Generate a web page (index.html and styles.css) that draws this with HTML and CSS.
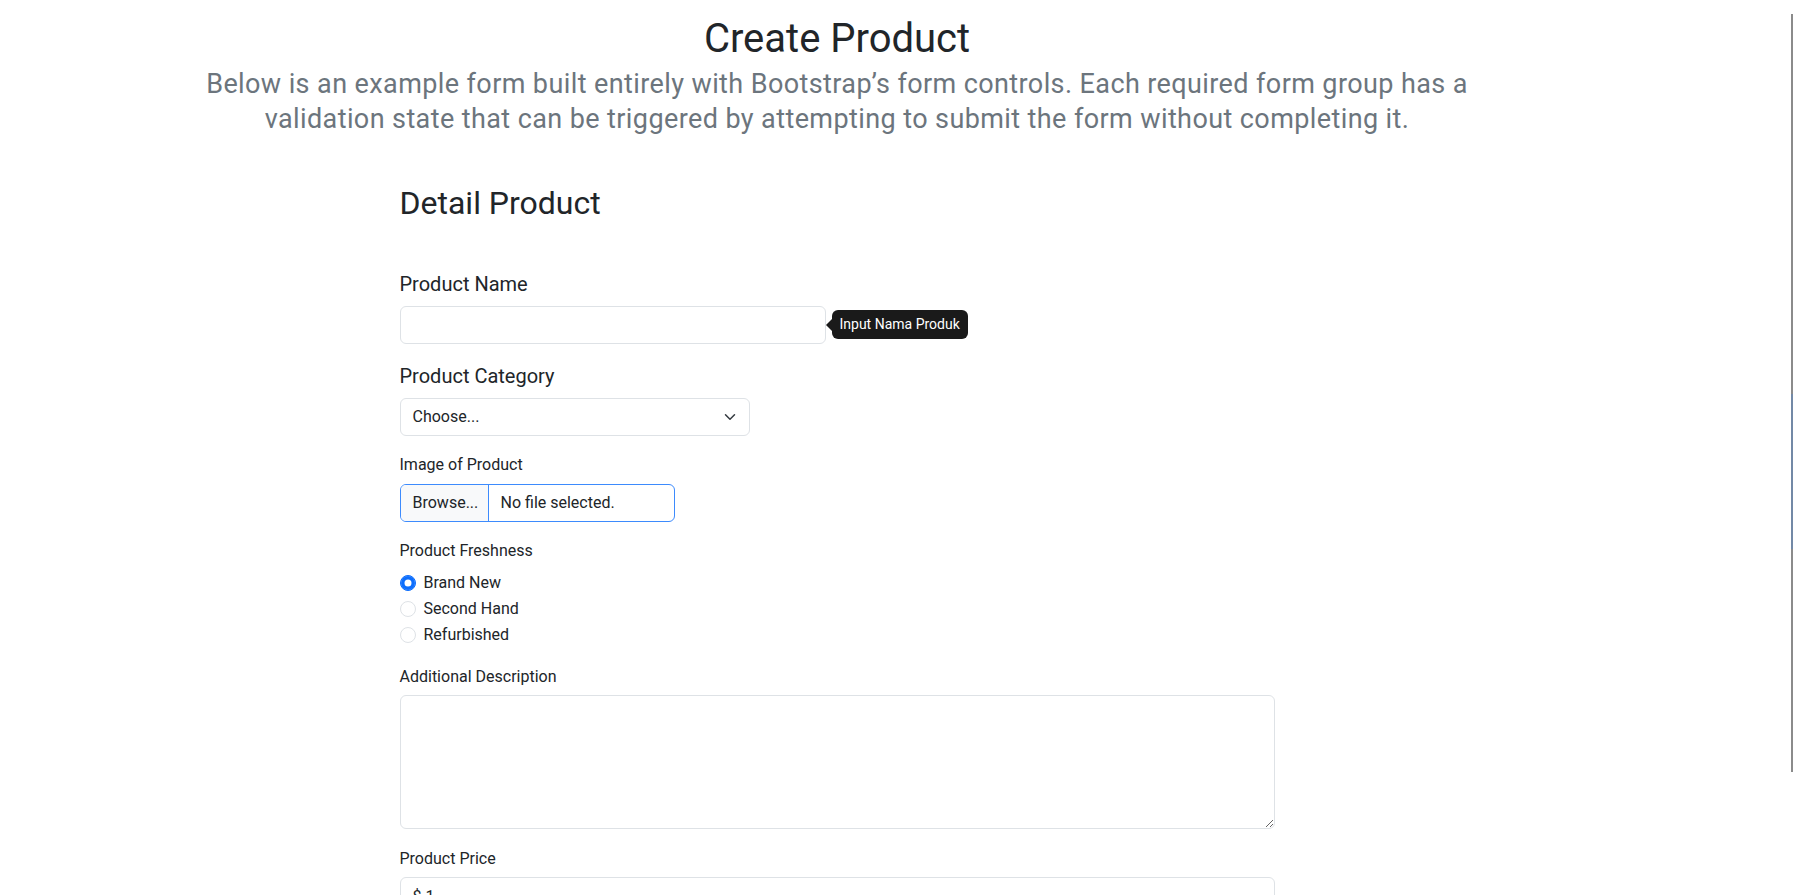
FILE: index.html
```html
<!DOCTYPE html>
<html lang="en">
<head>
<meta charset="utf-8">
<title>Create Product</title>
<link rel="stylesheet" href="styles.css">
</head>
<body>
<div class="page">
  <header class="intro">
    <h1 class="title">Create Product</h1>
    <p class="lead">Below is an example form built entirely with Bootstrap’s form controls. Each required form group has a<br>validation state that can be triggered by attempting to submit the form without completing it.</p>
  </header>

  <form class="form">
    <h2 class="section-title">Detail Product</h2>

    <div class="group">
      <label class="label label-lg" for="name">Product Name</label>
      <div class="name-wrap">
        <input class="control" id="name" type="text">
        <div class="tooltip"><span class="tooltip-arrow"></span>Input Nama Produk</div>
      </div>
    </div>

    <div class="group">
      <label class="label label-lg">Product Category</label>
      <div class="control select">
        <span>Choose...</span>
        <svg class="chevron" width="16" height="12" viewBox="0 0 16 16" aria-hidden="true"><path d="m2 5 6 6 6-6" fill="none" stroke="#343a40" stroke-linecap="round" stroke-linejoin="round" stroke-width="2"/></svg>
      </div>
    </div>

    <div class="group">
      <label class="label">Image of Product</label>
      <div class="file">
        <span class="file-btn">Browse...</span>
        <span class="file-name">No file selected.</span>
      </div>
    </div>

    <div class="group group-checks">
      <div class="label">Product Freshness</div>
      <div class="check"><span class="radio radio-on"></span><span>Brand New</span></div>
      <div class="check"><span class="radio"></span><span>Second Hand</span></div>
      <div class="check"><span class="radio"></span><span>Refurbished</span></div>
    </div>

    <div class="group">
      <label class="label label-low" for="desc">Additional Description</label>
      <textarea class="control textarea" id="desc" rows="5"></textarea>
    </div>

    <div class="group">
      <label class="label label-low" for="price">Product Price</label>
      <input class="control" id="price" type="text" value="$ 1">
    </div>
  </form>
</div>
<div class="scrollbar"><span class="scroll-thumb"></span></div>
</body>
</html>
```

FILE: styles.css
```css
html, body {
  margin: 0;
  padding: 0;
  overflow: hidden;
  background: #fff;
}

body {
  font-family: Roboto, "Liberation Sans", sans-serif;
  font-size: 16px;
  line-height: 1.5;
  color: #212529;
}

.page {
  width: 1674px;
}

.intro {
  text-align: center;
  padding-top: 15px;
}

.title {
  margin: 0;
  font-size: 40px;
  font-weight: 400;
  line-height: 48px;
}

.lead {
  margin: 4px 0 0;
  font-size: 27px;
  line-height: 35px;
  letter-spacing: 0.4px;
  color: #6c757d;
}

.form {
  width: 875px;
  margin: 0 auto;
}

.section-title {
  margin: 47px 0 46px;
  font-size: 32px;
  font-weight: 400;
  line-height: 38px;
}

.group {
  margin-bottom: 16px;
}

.group-checks {
  margin-bottom: 17px;
}

.label {
  display: block;
  box-sizing: border-box;
  margin-bottom: 8px;
  padding-top: 1px;
  height: 24px;
  font-size: 16px;
  line-height: 24px;
}

.label-lg {
  height: 30px;
  padding-top: 1px;
  font-size: 20px;
  line-height: 30px;
}

.label-low {
  padding-top: 2px;
}

.control {
  display: block;
  box-sizing: border-box;
  width: 100%;
  height: 38px;
  padding: 6px 12px;
  border: 1px solid #dee2e6;
  border-radius: 6px;
  background: #fff;
  font-family: inherit;
  font-size: 16px;
  line-height: 24px;
  color: #212529;
  outline: none;
}

.name-wrap {
  position: relative;
  width: 426px;
}

.tooltip {
  position: absolute;
  left: calc(100% + 6px);
  top: 4px;
  padding: 4px 8px;
  border-radius: 6px;
  background: #1a1a1a;
  color: #fff;
  font-size: 14px;
  line-height: 21px;
  white-space: nowrap;
}

.tooltip-arrow {
  position: absolute;
  left: -6px;
  top: 50%;
  margin-top: -6px;
  width: 0;
  height: 0;
  border-top: 6px solid transparent;
  border-bottom: 6px solid transparent;
  border-right: 6px solid #1a1a1a;
}

.select {
  display: flex;
  align-items: center;
  justify-content: space-between;
  width: 350px;
  padding-right: 11px;
}

.chevron {
  display: block;
}

.file {
  display: flex;
  box-sizing: border-box;
  width: 275px;
  height: 38px;
  border: 1px solid #3d8bfd;
  border-radius: 6px;
  overflow: hidden;
  font-size: 16px;
  line-height: 24px;
}

.file-btn {
  display: flex;
  align-items: center;
  box-sizing: border-box;
  width: 88px;
  padding: 0 0 0 12px;
  background: #f8f9fa;
  border-right: 1px solid #3d8bfd;
}

.file-name {
  display: flex;
  align-items: center;
  padding-left: 12px;
}

.check {
  display: flex;
  align-items: center;
  box-sizing: border-box;
  height: 24px;
  margin-bottom: 2px;
  padding-top: 1px;
}

.radio {
  box-sizing: border-box;
  flex: none;
  width: 16px;
  height: 16px;
  margin-right: 8px;
  border: 1px solid #dee2e6;
  border-radius: 50%;
  background: #fff;
}

.radio-on {
  border-color: #0d6efd;
  background: #0d6efd;
  box-shadow: inset 0 0 0 3.5px #0d6efd, inset 0 0 0 8px #fff;
}

.textarea {
  height: 134px;
  resize: vertical;
}

.scrollbar {
  position: fixed;
  left: 1791px;
  top: 14px;
  width: 2px;
  height: 758px;
  background: #8b8b8b;
}

.scroll-thumb {
  position: absolute;
  left: 0;
  top: 380px;
  width: 2px;
  height: 155px;
  background: #7389a6;
}
```
